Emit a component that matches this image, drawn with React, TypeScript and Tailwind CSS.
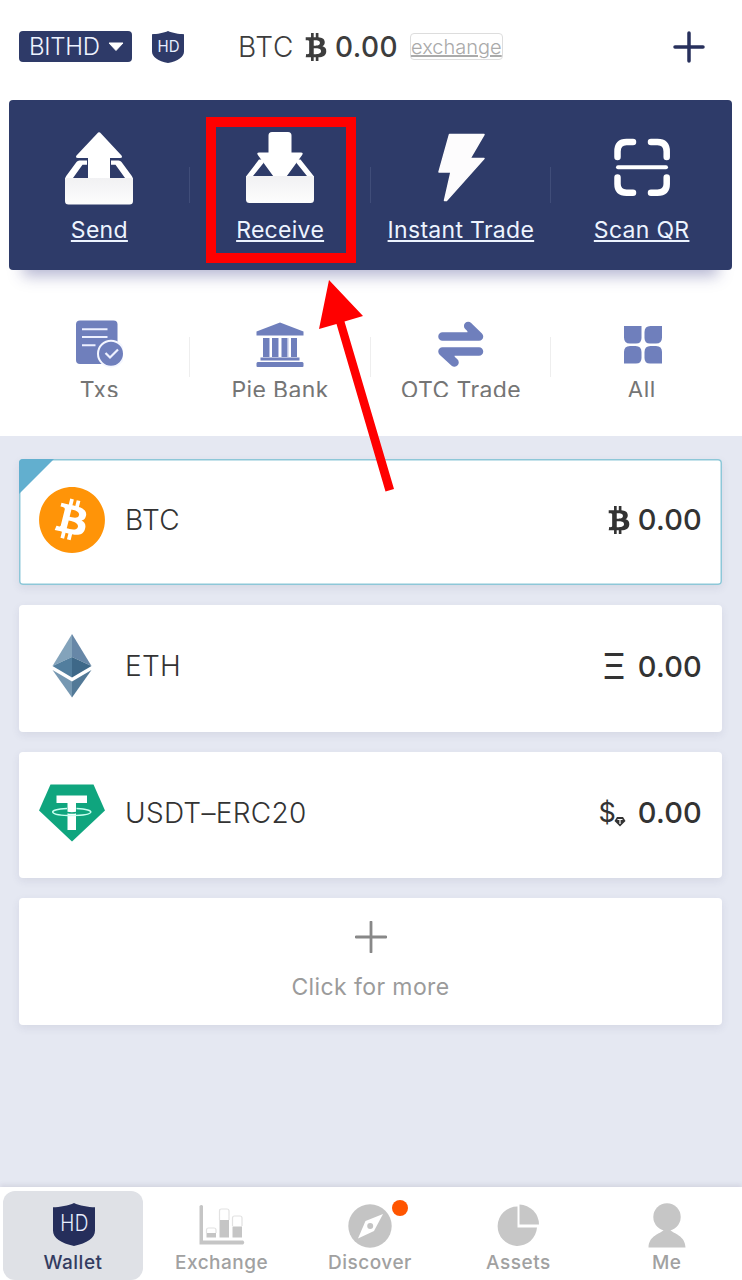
import type { ReactNode } from 'react';
import { FaBitcoin, FaBtc } from 'react-icons/fa';

const SHIELD = 'M16 0C12 2 5 3 0 3.2V20.500C0 26 6 30 16 32C26 30 32 26 32 20.500V3.200C27 3 20 2 16 0Z';

function Shield({ className, fill, weight }: { className: string; fill: string; weight: number }) {
  return (
    <svg viewBox="0 0 32 32" preserveAspectRatio="none" className={className}>
      <path d={SHIELD} fill={fill} />
      <text x="16.5" y="21" textAnchor="middle" fontSize="16.5" fontWeight={weight} fill="#e8efff" textLength="22" lengthAdjust="spacingAndGlyphs">HD</text>
    </svg>
  );
}

function SendIcon() {
  return (
    <svg viewBox="0 0 68 74" className="w-[68px] h-[74px]">
      <defs>
        <linearGradient id="tray" x1="0" y1="0" x2="0" y2="1">
          <stop offset="0" stopColor="#f1f1f3" />
          <stop offset="1" stopColor="#fdfdfd" />
        </linearGradient>
      </defs>
      <path d="M32.200 1.500Q34 -.8 36 1.500L56.500 23.500Q58 26 55 26H45V46H23V26H13Q10 26 11.500 23.500Z" fill="#fff" />
      <path d="M14.500 28.500H22V32.800H17.500L8 46V48H0Q0 45.500 1.200 44L11.500 30Q12.500 28.500 14.500 28.500ZM53.500 28.500H46V32.800H50.500L60 46V48H68Q68 45.500 66.800 44L56.500 30Q55.500 28.500 53.500 28.500Z" fill="#fff" />
      <path d="M0 46H68V69Q68 72.500 64.500 72.500H3.500Q0 72.500 0 69Z" fill="url(#tray)" />
    </svg>
  );
}

function ReceiveIcon() {
  return (
    <svg viewBox="0 0 68 74" className="w-[68px] h-[74px]">
      <path d="M13 27.500L0 44.500V48H68V44.500L54.500 27.500H50.500V31L61 44H7L17.500 31V27.500Z" fill="#fff" />
      <path d="M26 0H42Q45.500 0 45.500 3.500V20.500H55C56.800 20.500 57.300 21.500 56 23.300L40.500 44.500H27.500L12 23.300C10.700 21.500 11.200 20.500 13 20.500H22.500V3.500Q22.500 0 26 0Z" fill="#fff" />
      <path d="M0 44H68V67.500Q68 71 64.500 71H3.500Q0 71 0 67.500Z" fill="url(#tray)" />
    </svg>
  );
}

function BoltIcon() {
  return (
    <svg viewBox="0 0 68 74" className="w-[68px] h-[74px]">
      <path d="M22.500 2.500H57L43 26.500H57L19.500 68.500H17.500L24 40H12Z" fill="#fdfcfd" stroke="#fdfcfd" strokeWidth="1.500" strokeLinejoin="round" />
    </svg>
  );
}

function ScanIcon() {
  return (
    <svg viewBox="0 0 68 74" className="w-[68px] h-[74px]" fill="none" stroke="#fff" strokeWidth="6.500" strokeLinecap="round">
      <path d="M9.500 25V19.500Q9.500 10 18.500 10H25M43 10H49.500Q58.700 10 58.700 19.500V25M9.500 45.500V52Q9.500 60.700 18.500 60.700H25M43 60.700H49.500Q58.700 60.700 58.700 52V45.500" />
      <path d="M10 35.300H58" strokeWidth="4" />
    </svg>
  );
}

function TxsIcon() {
  return (
    <svg viewBox="0 0 48 48" className="w-12 h-12">
      <rect x="1" y=".5" width="41.500" height="43.500" rx="4" fill="#6f7fbc" />
      <path d="M7 9.300H32.500M7 17H32.500M7 25.200H20.500" stroke="#edf0ff" strokeWidth="2" />
      <circle cx="36" cy="33.700" r="13" fill="#6f7fbc" stroke="#f4f6ff" strokeWidth="2" />
      <path d="M30.500 33L35 37.500L43 29.500" fill="none" stroke="#eef1ff" strokeWidth="2.200" />
    </svg>
  );
}

function BankIcon() {
  return (
    <svg viewBox="0 0 48 48" className="w-12 h-12" fill="#6f7fbc">
      <path d="M24 2.500L47.500 11.500V15.500H.5V11.500Z" />
      <path d="M7 18H13V37H7ZM16 18H22V37H16ZM25.500 18H31.500V37H25.500ZM35 18H41V37H35ZM4.500 37.500H43.500V40.500H4.500Z" />
      <path d="M1.500 42H46.500L47.500 43V46Q47.500 47 46.500 47H1.500Q.5 47 .5 46V43Z" />
      <path d="M13 18H14V37H13ZM22 18H23V37H22ZM31.500 18H32.500V37H31.500Z" fill="#b8c0e4" />
    </svg>
  );
}

function SwapIcon() {
  return (
    <svg viewBox="0 0 48 48" className="w-12 h-12" fill="none" stroke="#6f7fbc" strokeWidth="8.500" strokeLinecap="round" strokeLinejoin="round">
      <path d="M5.500 16.500H42L31.200 6M42 31.500H5.500L17.500 42.500" />
      <path d="M33 10L41 16.500H33ZM15 38L7 31.500H15Z" strokeWidth="5" fill="#6f7fbc" />
    </svg>
  );
}

function GridIcon() {
  return (
    <svg viewBox="0 0 48 48" className="w-12 h-12" fill="#6f7fbc">
      <path d="M6 6H23.500V18Q23.500 23.500 18 23.500H12Q6 23.500 6 17.500ZM44 6V17.500Q44 23.500 38 23.500H32Q26.500 23.500 26.500 18V12Q26.500 6 32.500 6ZM6 43.500V32Q6 26 12 26H17.500Q23.500 26 23.500 32V38Q23.500 43.500 18 43.500ZM44 43.500H32Q26.500 43.500 26.500 38V32Q26.500 26 32.500 26H38Q44 26 44 32Z" />
    </svg>
  );
}

function EthIcon() {
  return (
    <svg viewBox="0 0 40 64" className="w-10 h-16 mx-auto">
      <path d="M20 0L.5 32L20 23Z" fill="#83a3bb" />
      <path d="M20 0L39.500 32L20 23Z" fill="#6787a7" />
      <path d="M.5 32L20 23V43.500Z" fill="#527e9e" />
      <path d="M39.500 32L20 23V43.500Z" fill="#3e6888" />
      <path d="M.5 36L20 47.500V63.500Z" fill="#7698b2" />
      <path d="M39.500 36L20 47.500V63.500Z" fill="#527997" />
    </svg>
  );
}

function TetherIcon() {
  return (
    <svg viewBox="0 0 68 58" className="w-[68px] h-[58px]">
      <path d="M12.500 .5H55.500L67 26.500L34 57.500L1 26.500Z" fill="#0fa57e" />
      <path d="M18.500 11.500H49V19H38V46H29.500V19H18.500Z" fill="#fff" />
      <path d="M29 24.500C8 25.300 10.500 31.500 34 31.500S59 25.300 38.500 24.500" fill="none" stroke="#c8fff0" strokeWidth="1.500" />
      <path d="M29 28.500Q34 29.500 38.500 28.500" fill="none" stroke="#0fa57e" strokeWidth="1.500" />
    </svg>
  );
}

function Dollar() {
  return (
    <span className="flex items-end">
      <span className="text-[27px] leading-[34px]">$</span>
      <svg viewBox="0 0 12 12" className="w-3 h-3 -ml-0.5 mb-0.5">
        <path d="M3 1H9L11.500 5L6 10.500L.5 5Z" fill="#333" />
        <path d="M3.500 3.500H8.500M6 3.500V8" stroke="#fff" strokeWidth="1.200" />
      </svg>
    </span>
  );
}

const ACTIONS = [
  { label: 'Send', icon: <SendIcon /> },
  { label: 'Receive', icon: <ReceiveIcon /> },
  { label: 'Instant Trade', icon: <BoltIcon /> },
  { label: 'Scan QR', icon: <ScanIcon /> },
];

const SHORTCUTS = [
  { label: 'Txs', icon: <TxsIcon /> },
  { label: 'Pie Bank', icon: <BankIcon /> },
  { label: 'OTC Trade', icon: <SwapIcon /> },
  { label: 'All', icon: <GridIcon /> },
];

const COINS = [
  { name: 'BTC', icon: <FaBitcoin className="w-[68px] h-[68px] text-[#ff9408]" />, sign: <FaBtc className="w-[22px] h-[28px]" />, gap: 'gap-2', active: true },
  { name: 'ETH', icon: <EthIcon />, sign: <span className="text-[36px] leading-[34px]">Ξ</span>, gap: 'gap-3', active: false },
  { name: 'USDT–ERC20', icon: <TetherIcon />, sign: <Dollar />, gap: 'gap-3', active: false },
];

function ExchangeIcon() {
  return (
    <svg viewBox="0 0 48 44" className="w-12 h-11" fill="#c5c5c5">
      <path d="M1.500 2Q3.500 0 5 2V36.500H45Q47.500 38.500 45 40.500H1.500Z" />
      <path d="M8.500 29H18V33.500H8.500ZM21.500 16H31V33.500H21.500ZM34.500 22.500H44V33.500H34.500Z" />
      <path d="M8.500 29V26Q8.500 24 10.500 24H16Q18 24 18 26V29M21.500 16V7Q21.500 5 23.500 5H29Q31 5 31 7V16M34.500 22V14Q34.500 12 36.500 12H42Q44 12 44 14V22" fill="none" stroke="#e2e2e2" strokeWidth="1.200" />
    </svg>
  );
}

function DiscoverIcon() {
  return (
    <span className="relative">
      <svg viewBox="0 0 44 44" className="w-11 h-11">
        <circle cx="22" cy="22" r="21.700" fill="#c4c4c4" />
        <path d="M35 10L17.500 17L10 34.500L26 27Z" fill="#fff" />
        <circle cx="22.200" cy="22" r="3" fill="#c4c4c4" />
      </svg>
      <span className="absolute -top-1 left-11 w-4 h-4 rounded-full bg-[#ff5500]" />
    </span>
  );
}

function AssetsIcon() {
  return (
    <svg viewBox="0 0 44 44" className="w-11 h-11" fill="#c7c7c7">
      <path d="M21.500 2.500V23.500H41A19.700 19.700 0 1 1 21.500 2.500Z" />
      <path d="M23.500 .5A20 20 0 0 1 43 20.500H23.500Z" />
    </svg>
  );
}

function MeIcon() {
  return (
    <svg viewBox="0 0 44 46" className="w-11 h-[46px]" fill="#c6c6c6">
      <circle cx="22" cy="14" r="13.700" />
      <path d="M19 26.500H25C29 31.500 40 32 40.500 44.500H3.500C4 32 15 31.500 19 26.500Z" />
    </svg>
  );
}

const TABS: { label: string; icon: ReactNode }[] = [
  { label: 'Exchange', icon: <ExchangeIcon /> },
  { label: 'Discover', icon: <DiscoverIcon /> },
  { label: 'Assets', icon: <AssetsIcon /> },
  { label: 'Me', icon: <MeIcon /> },
];

export default function App() {
  return (
    <div className="relative w-[742px] h-[1280px] overflow-hidden bg-white flex flex-col font-['Inter','Liberation_Sans',sans-serif] text-[#333]">
      <header className="h-[100px] shrink-0 flex items-center pl-[19px] pr-[37px] pb-[7px]">
        <button className="w-[113px] h-[31px] rounded bg-[#2e3a68] text-[#eef3ff] flex items-center pl-2.5 gap-2 text-[24px] font-light tracking-[-0.3px]">
          <span>BITHD</span>
          <svg viewBox="0 0 16 10" className="w-4 h-2.5 shrink-0">
            <path d="M1 1H15L8 8.500Z" fill="#fff" stroke="#fff" strokeLinejoin="round" />
          </svg>
        </button>
        <Shield className="w-8 h-8 ml-5" fill="#2e3a68" weight={400} />
        <div className="ml-[54px] flex items-center text-[28px] text-[#3d3d3d]">
          <span className="font-light tracking-[0.7px]">BTC</span>
          <FaBtc className="w-[22px] h-7 ml-[11px]" />
          <span className="ml-2 font-medium tracking-[0.4px]">0.00</span>
        </div>
        <span className="ml-3 h-[27px] w-[93px] rounded-sm border border-[#ddd] flex items-center justify-center text-[20px] font-light text-[#aaa] underline">exchange</span>
        <svg viewBox="0 0 32 32" className="w-8 h-8 ml-auto">
          <path d="M16 2V30M2 16H30" stroke="#27305c" strokeWidth="3.500" strokeLinecap="round" />
        </svg>
      </header>

      <nav className="ml-[9px] w-[723px] h-[170px] shrink-0 grid grid-cols-4 rounded bg-[#2e3b69] shadow-[0_20px_14px_-14px_rgba(46,50,125,0.35)]">
        {ACTIONS.map((a, i) => (
          <a key={a.label} className="relative flex flex-col items-center pt-8 text-[#edf4ff]">
            {a.icon}
            <span className="mt-2.5 text-[23px] leading-7 tracking-[0.3px] underline underline-offset-2 decoration-2 whitespace-nowrap">{a.label}</span>
            {i < 3 && <span className="absolute right-0 top-[67px] h-9 w-px bg-[#404d79]" />}
          </a>
        ))}
      </nav>

      <nav className="ml-[9px] w-[723px] h-[166px] shrink-0 grid grid-cols-4">
        {SHORTCUTS.map((s, i) => (
          <a key={s.label} className="relative flex flex-col items-center pt-[50px] text-[#757575]">
            {s.icon}
            <span className="mt-2 h-[21px] overflow-hidden text-[23px] leading-7 tracking-[0.35px] whitespace-nowrap">{s.label}</span>
            {i < 3 && <span className="absolute right-0 top-[67px] h-10 w-px bg-[#eeeeee]" />}
          </a>
        ))}
      </nav>

      <main className="flex-1 bg-[#e5e8f2] px-[19px] pr-5 pt-[22.500px] flex flex-col gap-5">
        {COINS.map(c => (
          <section
            key={c.name}
            className={`relative h-[126.500px] shrink-0 rounded overflow-hidden bg-white flex items-center pl-[19px] pr-5 pb-1 shadow-[0_3px_8px_rgba(60,60,100,0.09)] ${c.active ? 'ring-[1.500px] ring-inset ring-[#8dc7d8]' : ''}`}
          >
            {c.active && (
              <svg viewBox="0 0 35 35" className="absolute left-0 top-0 w-[35px] h-[35px]">
                <path d="M0 0H35L0 35Z" fill="#62afcf" />
              </svg>
            )}
            <div className="w-[68px]">{c.icon}</div>
            <span className="ml-[19px] text-[28px] font-light tracking-[0.3px]">{c.name}</span>
            <div className={`ml-auto flex items-center ${c.gap}`}>
              {c.sign}
              <span className="text-[29px] font-medium tracking-[0.2px]">0.00</span>
            </div>
          </section>
        ))}
        <button className="h-[126.500px] shrink-0 rounded bg-white flex flex-col items-center pt-[23px] text-[#9b9b9b] shadow-[0_3px_8px_rgba(60,60,100,0.09)]">
          <svg viewBox="0 0 32 32" className="w-8 h-8">
            <path d="M16 1V31M1 16H31" stroke="#888" strokeWidth="2.800" strokeLinecap="round" />
          </svg>
          <span className="mt-5 text-[23px] leading-7 tracking-[0.4px]">Click for more</span>
        </button>
      </main>

      <footer className="h-[93px] shrink-0 grid grid-cols-5 bg-white shadow-[0_-2px_5px_rgba(70,60,90,0.12)] text-[19px] leading-6 font-medium tracking-[0.5px] text-[#a1a1a1]">
        <a className="mt-1 ml-[3px] w-[140px] h-[89px] rounded-xl bg-[#dfe1e6] text-[#333c61] flex flex-col items-center pt-3">
          <Shield className="w-[42px] h-[43px] ml-0.5" fill="#252e5b" weight={300} />
          <span className="mt-[5px]">Wallet</span>
        </a>
        {TABS.map(t => (
          <a key={t.label} className="flex flex-col items-center pr-0.5">
            <span className="h-16 pt-3.5 flex items-center">{t.icon}</span>
            <span>{t.label}</span>
          </a>
        ))}
      </footer>

      {/* pointer to the receive action */}
      <div className="absolute left-[206px] top-[117px] w-[150px] h-[146px] border-[10px] border-[#ff0000]" />
      <svg viewBox="0 0 80 220" className="absolute left-[315px] top-[275px] w-20 h-[220px]">
        <path d="M14 5L48 41L29.500 46.500L79 214L70.500 216.500L21.500 49L4 54Z" fill="#ff0000" />
      </svg>
    </div>
  );
}
